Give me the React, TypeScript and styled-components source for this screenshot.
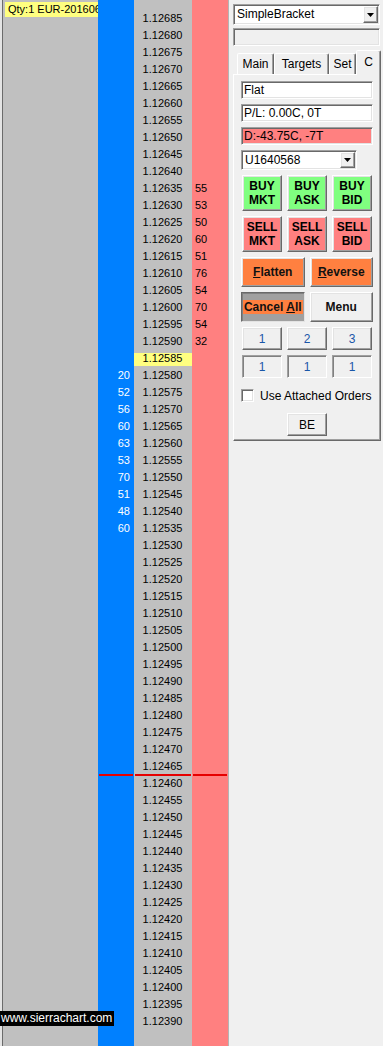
import React from "react";
import styled, { createGlobalStyle, css } from "styled-components";

const GlobalStyle = createGlobalStyle`
  html, body { margin: 0; padding: 0; }
  body { background: #f0f0f0; font-family: "Liberation Sans", Arial, sans-serif; }
`;

// ladder data
const prices = Array.from({ length: 60 }, (_, i) => 12685 - i * 5);
const asks: Record<number, number> = {
  12635: 55, 12630: 53, 12625: 50, 12620: 60, 12615: 51,
  12610: 76, 12605: 54, 12600: 70, 12595: 54, 12590: 32,
};
const bids: Record<number, number> = {
  12580: 20, 12575: 52, 12570: 56, 12565: 60, 12560: 63,
  12555: 53, 12550: 70, 12545: 51, 12540: 48, 12535: 60,
};
const LAST = 12585;
const MARK = 12465;

type Tone = "bid" | "price" | "ask";

const sunken = css`
  border: 1px solid;
  border-color: #a0a0a0 #ffffff #ffffff #a0a0a0;
  box-shadow: inset 1px 1px #696969, inset -1px -1px #e3e3e3;
`;
const raised = css`
  border: 1px solid;
  border-color: #ffffff #696969 #696969 #ffffff;
  box-shadow: inset -1px -1px #a0a0a0, inset 1px 1px #e3e3e3;
`;

export default function App() {
  return (
    <Screen>
      <GlobalStyle />
      <Chart>
        <InfoCol>
          <QtyLabel>Qty:1 EUR-201606</QtyLabel>
        </InfoCol>
        <Column $tone="bid">
          {prices.map((p) => (
            <Cell key={p} $tone="bid" $marked={p === MARK}>{bids[p] ?? ""}</Cell>
          ))}
        </Column>
        <Column $tone="price">
          {prices.map((p) => (
            <Cell key={p} $tone="price" $marked={p === MARK} $current={p === LAST}>
              1.{p}
            </Cell>
          ))}
        </Column>
        <Column $tone="ask">
          {prices.map((p) => (
            <Cell key={p} $tone="ask" $marked={p === MARK}>{asks[p] ?? ""}</Cell>
          ))}
        </Column>
        <Watermark>www.sierrachart.com</Watermark>
      </Chart>

      <Side>
        <Combo $w={147} $h={21}>
          <span>SimpleBracket</span>
          <DropButton><Arrow /></DropButton>
        </Combo>
        <BlankField />
        <TabStrip>
          <Tab $w={37}>Main</Tab>
          <Tab $w={55}>Targets</Tab>
          <Tab $w={27}>Set</Tab>
          <Tab $w={25} $active>C</Tab>
        </TabStrip>
        <TabPage>
          <Field>Flat</Field>
          <Field>P/L: 0.00C, 0T</Field>
          <Field $bg="#ff8080">D:-43.75C, -7T</Field>
          <Combo $w={116} $h={20}>
            <span>U1640568</span>
            <DropButton><Arrow /></DropButton>
          </Combo>
          <TripleRow>
            <OrderButton $bg="#80ff80">BUY<br />MKT</OrderButton>
            <OrderButton $bg="#80ff80">BUY<br />ASK</OrderButton>
            <OrderButton $bg="#80ff80">BUY<br />BID</OrderButton>
          </TripleRow>
          <TripleRow>
            <OrderButton $bg="#ff8080">SELL<br />MKT</OrderButton>
            <OrderButton $bg="#ff8080">SELL<br />ASK</OrderButton>
            <OrderButton $bg="#ff8080">SELL<br />BID</OrderButton>
          </TripleRow>
          <PairRow>
            <ActionButton $bg="#ff8040"><u>F</u>latten</ActionButton>
            <ActionButton $bg="#ff8040"><u>R</u>everse</ActionButton>
          </PairRow>
          <PairRow>
            <ActionButton $bg="#a0a0a0" $pressed>
              <Highlight>Cancel <u>A</u>ll</Highlight>
            </ActionButton>
            <ActionButton $bg="#f0f0f0">Menu</ActionButton>
          </PairRow>
          <TripleRow>
            <QtyButton>1</QtyButton>
            <QtyButton>2</QtyButton>
            <QtyButton>3</QtyButton>
          </TripleRow>
          <TripleRow>
            <QtyButton $edit>1</QtyButton>
            <QtyButton $edit>1</QtyButton>
            <QtyButton $edit>1</QtyButton>
          </TripleRow>
          <CheckRow>
            <CheckBox />
            <span>Use Attached Orders</span>
          </CheckRow>
          <CenterRow>
            <QtyButton $plain>BE</QtyButton>
          </CenterRow>
        </TabPage>
      </Side>
    </Screen>
  );
}

function Arrow() {
  return (
    <svg width="7" height="4" viewBox="0 0 7 4">
      <polygon points="0,0 7,0 3.5,4" fill="#000" />
    </svg>
  );
}

// --- chart ---
const Screen = styled.div`
  display: flex;
  width: 383px;
  height: 1046px;
  overflow: hidden;
`;
const Chart = styled.div`
  position: relative;
  flex: none;
  display: flex;
  width: 228px;
  height: 100%;
  box-sizing: border-box;
  border-left: 2px solid #e4e4e4;
  background: #c0c0c0;
  font-size: 11px;
  color: #000;
`;
const InfoCol = styled.div`
  width: 96px;
  box-sizing: border-box;
  border-left: 1px solid #6b6b6b;
  padding: 2px 0 0 2px;
  overflow: hidden;
`;
const QtyLabel = styled.div`
  width: fit-content;
  max-width: 100%;
  box-sizing: border-box;
  overflow: hidden;
  white-space: nowrap;
  height: 15px;
  line-height: 15px;
  padding: 0 0 0 3px;
  background: #ffff80;
`;
const Column = styled.div<{ $tone: Tone }>`
  width: ${(p) => (p.$tone === "price" ? 58 : 36)}px;
  box-sizing: border-box;
  padding-top: 10px;
  background: ${(p) => (p.$tone === "bid" ? "#0080ff" : p.$tone === "ask" ? "#ff8080" : "#c0c0c0")};
`;
const Cell = styled.div<{ $tone: Tone; $marked?: boolean; $current?: boolean }>`
  position: relative;
  height: 17px;
  line-height: 17px;
  white-space: nowrap;
  text-align: ${(p) => (p.$tone === "bid" ? "right" : p.$tone === "ask" ? "left" : "center")};
  padding: ${(p) => (p.$tone === "bid" ? "0 4px 0 0" : p.$tone === "ask" ? "0 0 0 3px" : "0 1px 0 0")};
  color: ${(p) => (p.$tone === "bid" ? "#ffffff" : "#000000")};
  ${(p) =>
    p.$current &&
    css`
      background: linear-gradient(to bottom, transparent 3px, #ffff80 3px, #ffff80 16px, transparent 16px);
    `}
  ${(p) =>
    p.$marked &&
    css`
      &::after {
        content: "";
        position: absolute;
        left: 1px;
        right: 1px;
        bottom: -1px;
        height: 2px;
        background: #e60000;
      }
    `}
`;
const Watermark = styled.div`
  position: absolute;
  left: -2px;
  bottom: 20px;
  height: 15px;
  line-height: 15px;
  padding: 0 2px 0 1px;
  background: #000;
  color: #fff;
  font-size: 12px;
`;

// --- side panel ---
const Side = styled.div`
  flex: none;
  width: 155px;
  height: 100%;
  box-sizing: border-box;
  border-left: 1px solid #b4b4b4;
  padding: 4px 0 0 4px;
  background: #f0f0f0;
  display: flex;
  flex-direction: column;
  font-size: 12px;
  color: #000;
`;
const Combo = styled.div<{ $w: number; $h: number }>`
  width: ${(p) => p.$w}px;
  height: ${(p) => p.$h}px;
  box-sizing: border-box;
  ${sunken};
  background: #fff;
  display: flex;
  align-items: stretch;
  justify-content: space-between;
  padding: 1px 1px 1px 3px;
  line-height: 17px;
  span { align-self: center; }
`;
const DropButton = styled.div`
  width: 15px;
  box-sizing: border-box;
  ${raised};
  background: #f0f0f0;
  display: flex;
  align-items: center;
  justify-content: center;
`;
const BlankField = styled.div`
  width: 147px;
  height: 18px;
  margin-top: 3px;
  box-sizing: border-box;
  ${sunken};
  background: #f0f0f0;
`;
const TabStrip = styled.div`
  position: relative;
  z-index: 1;
  display: flex;
  align-items: flex-end;
  height: 24px;
  margin-top: 4px;
  padding-left: 4px;
`;
const Tab = styled.div<{ $w: number; $active?: boolean }>`
  width: ${(p) => p.$w}px;
  height: ${(p) => (p.$active ? 25 : 21)}px;
  margin-bottom: ${(p) => (p.$active ? -1 : 0)}px;
  box-sizing: border-box;
  border: 1px solid;
  border-bottom: none;
  border-color: #fff #696969 transparent #fff;
  border-radius: 2px 2px 0 0;
  box-shadow: inset -1px 0 #a0a0a0;
  background: #f0f0f0;
  text-align: center;
  line-height: 14px;
  padding-top: ${(p) => (p.$active ? 4 : 3)}px;
`;
const TabPage = styled.div`
  width: 148px;
  height: 367px;
  box-sizing: border-box;
  border: 1px solid;
  border-color: #fff #696969 #696969 #fff;
  box-shadow: inset -1px -1px #a0a0a0;
  padding: 6px 7px 0 7px;
  display: flex;
  flex-direction: column;
  gap: 5px;
`;
const Field = styled.div<{ $bg?: string }>`
  height: 18px;
  box-sizing: border-box;
  ${sunken};
  background: ${(p) => p.$bg ?? "#fff"};
  padding: 0 2px;
  line-height: 16px;
  white-space: nowrap;
`;
const TripleRow = styled.div`
  display: flex;
  justify-content: space-between;
  padding: 0 1px;
`;
const PairRow = styled.div`
  display: grid;
  grid-template-columns: 1fr 1fr;
  gap: 5px;
`;
const OrderButton = styled.div<{ $bg: string }>`
  width: 40px;
  height: 36px;
  box-sizing: border-box;
  ${raised};
  background: ${(p) => p.$bg};
  font-weight: bold;
  line-height: 14px;
  text-align: center;
  display: flex;
  align-items: center;
  justify-content: center;
`;
const ActionButton = styled.div<{ $bg: string; $pressed?: boolean }>`
  height: 30px;
  box-sizing: border-box;
  ${(p) =>
    p.$pressed
      ? css`
          border: 1px solid;
          border-color: #696969 #e3e3e3 #e3e3e3 #696969;
          box-shadow: inset 1px 1px #808080;
        `
      : raised};
  background: ${(p) => p.$bg};
  font-weight: bold;
  color: #111;
  display: flex;
  align-items: center;
  justify-content: center;
`;
const Highlight = styled.span`
  background: #ff8040;
  padding: 0 1px;
  line-height: 14px;
`;
const QtyButton = styled.div<{ $edit?: boolean; $plain?: boolean }>`
  width: 40px;
  height: 23px;
  box-sizing: border-box;
  ${(p) => (p.$edit ? sunken : raised)};
  ${(p) => p.$edit && css`box-shadow: inset 1px 1px #808080;`}
  background: #f0f0f0;
  color: ${(p) => (p.$plain ? "#000" : "#1a56a8")};
  display: flex;
  align-items: center;
  justify-content: center;
`;
const CheckRow = styled.div`
  height: 25px;
  display: flex;
  align-items: center;
  gap: 6px;
  white-space: nowrap;
`;
const CheckBox = styled.div`
  width: 13px;
  height: 13px;
  box-sizing: border-box;
  ${sunken};
  background: #fff;
`;
const CenterRow = styled.div`
  display: flex;
  justify-content: center;
`;
